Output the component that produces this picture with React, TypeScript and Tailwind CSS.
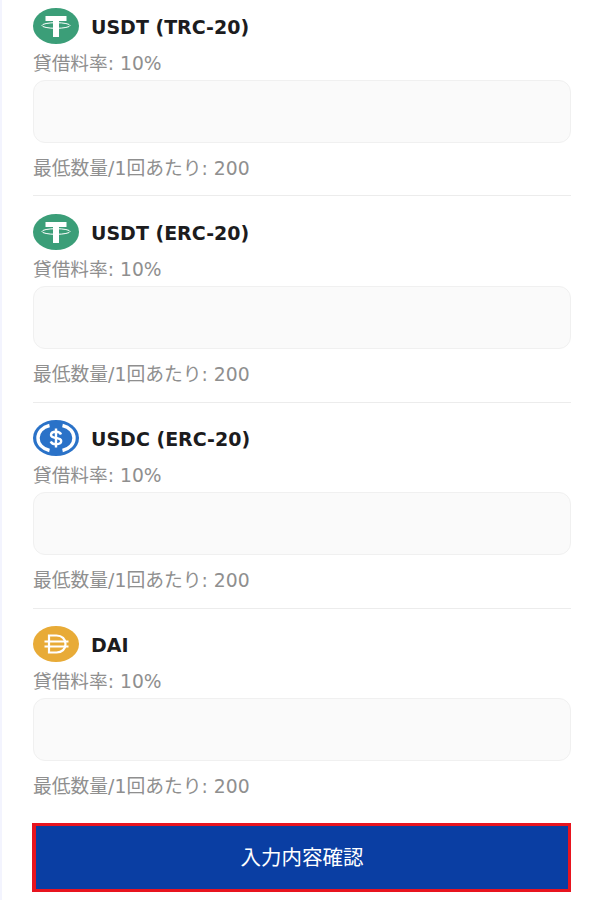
const sansStack = "font-['DejaVu_Sans','Noto_Sans_CJK_JP',sans-serif]";

function TetherIcon() {
  return (
    <svg viewBox="0 0 46 36" className="w-[46px] h-[36px] block">
      <ellipse cx="23" cy="18" rx="23" ry="18" fill="#3b9e78" />
      <path d="M12.500 8h21v5h-7.500v16h-6V13h-7.500z" fill="#fff" />
      <ellipse cx="23" cy="17.500" rx="14" ry="2.800" fill="none" stroke="#fff" strokeWidth="1" />
    </svg>
  );
}

function UsdcIcon() {
  return (
    <svg viewBox="0 0 46 36" className="w-[46px] h-[36px] block">
      <ellipse cx="23" cy="18" rx="23" ry="18" fill="#2a72c8" />
      <path d="M16.500 5.500C9.500 7 5 12 5 18s4.500 11 11.500 12.500" fill="none" stroke="#fff" strokeWidth="3.400" />
      <path d="M29.500 5.500C36.500 7 41 12 41 18s-4.500 11-11.500 12.500" fill="none" stroke="#fff" strokeWidth="3.400" />
      <path d="M28 14.500c-.6-1.800-2.600-2.700-5-2.700-2.900 0-5 1.300-5 3.200 0 4.300 10.200 1.800 10.200 6 0 2-2.200 3.200-5.200 3.200-2.600 0-4.500-1-5.300-2.800" fill="none" stroke="#fff" strokeWidth="2.400" />
      <path d="M23 8.500v19" stroke="#fff" strokeWidth="2.400" />
    </svg>
  );
}

function DaiIcon() {
  return (
    <svg viewBox="0 0 46 36" className="w-[46px] h-[36px] block">
      <ellipse cx="23" cy="18" rx="23" ry="18" fill="#e8ab37" />
      <path d="M16 9.500h7.500c5.500 0 9 3.600 9 8.500s-3.500 8.500-9 8.500H16z" fill="none" stroke="#fff" strokeWidth="2.200" />
      <path d="M11.500 15.500h24M11.500 20.500h24" stroke="#fff" strokeWidth="2" />
    </svg>
  );
}

const tokens = [
  { name: "USDT (TRC-20)", icon: <TetherIcon /> },
  { name: "USDT (ERC-20)", icon: <TetherIcon /> },
  { name: "USDC (ERC-20)", icon: <UsdcIcon /> },
  { name: "DAI", icon: <DaiIcon /> },
];

export default function App() {
  return (
    <div className={`w-[600px] h-[900px] overflow-hidden bg-white border-l-[2px] border-[#f3f4fe] pl-[31px] pr-[29px] pt-[8px] ${sansStack}`}>
      {tokens.map((token, i) => (
        <div key={i} className={i < 3 ? "h-[206px]" : "h-[197px]"}>
          <div className="flex items-center gap-[12px] h-[36px]">
            {token.icon}
            <span className="text-[19px] font-bold text-[#1c1c1e] leading-none pt-[2px]">{token.name}</span>
          </div>
          <p className="mt-[10px] h-[19px] text-[18.7px] leading-[20px] text-[#8f8f8f] whitespace-nowrap">貸借料率: 10%</p>
          <input className="block mt-[7px] w-full h-[63px] rounded-[12px] border border-[#f0f0f0] bg-[#fafafa]" />
          <p className="mt-[16px] h-[20px] text-[18.8px] leading-[20px] text-[#8f8f8f] whitespace-nowrap">最低数量/1回あたり: 200</p>
          {i < 3 && <div className={i === 0 ? "mt-[16px] h-px bg-[#ececec]" : "mt-[17px] h-px bg-[#ececec]"} />}
        </div>
      ))}
      <button className="flex items-center justify-center w-[539px] -ml-[1px] h-[69px] pt-[2px] bg-[#0a3ea3] border-[3px] border-l-[4px] border-[#e8141f] text-white text-[20.5px]">
        入力内容確認
      </button>
    </div>
  );
}
